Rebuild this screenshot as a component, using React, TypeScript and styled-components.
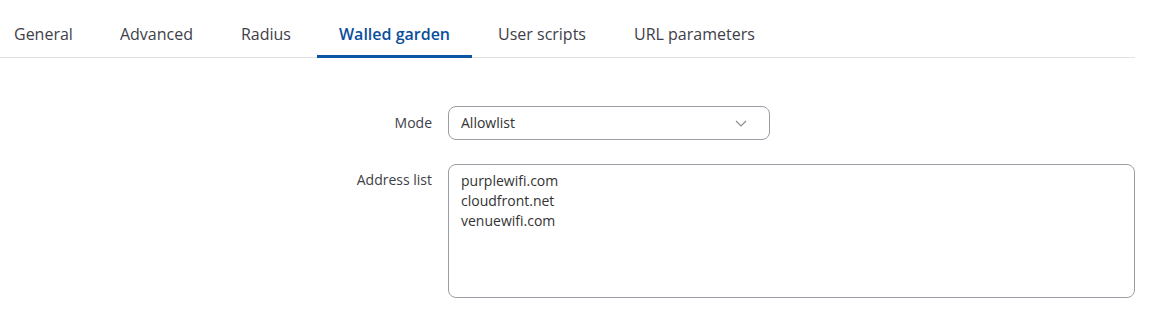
import React from "react";
import styled, { createGlobalStyle } from "styled-components";

const Global = createGlobalStyle`
  html, body { margin: 0; padding: 0; background: #fff; }
  body { font-family: "Open Sans", "Noto Sans", sans-serif; color: #333; }
  * { box-sizing: border-box; }
`;

const Page = styled.div`
  width: 1155px;
  padding-right: 20px;
`;

const TabBar = styled.nav`
  display: flex;
  height: 58px;
  border-bottom: 1px solid #e2e2e4;
  align-items: stretch;
`;

const Tab = styled.div<{ $active?: boolean }>`
  display: flex;
  align-items: center;
  padding: 12px 22px 0;
  margin-right: 4px;
  font-size: 16px;
  font-weight: ${(p) => (p.$active ? 600 : 400)};
  color: ${(p) => (p.$active ? "#0b4f9c" : "#404048")};
  border-bottom: 3px solid ${(p) => (p.$active ? "#0b55a3" : "transparent")};
  margin-bottom: -1px;
  white-space: nowrap;
  &:first-child {
    padding-left: 14px;
    margin-right: 3px;
  }
`;

const Form = styled.div`
  display: flex;
  flex-direction: column;
  gap: 24px;
  padding-top: 48px;
`;

const Row = styled.div<{ $top?: boolean }>`
  display: grid;
  grid-template-columns: 432px 1fr;
  column-gap: 16px;
  align-items: ${(p) => (p.$top ? "start" : "center")};
`;

const Label = styled.label<{ $top?: boolean }>`
  text-align: right;
  font-size: 14px;
  color: #404048;
  padding-top: ${(p) => (p.$top ? "6px" : "0")};
  margin-top: ${(p) => (p.$top ? "0" : "-2px")};
`;

const Select = styled.div`
  width: 322px;
  height: 34px;
  border: 1px solid #9c9ca4;
  border-radius: 8px;
  display: flex;
  align-items: center;
  justify-content: space-between;
  padding: 0 22px 0 12px;
  font-size: 14px;
  color: #333;
  span { margin-top: -2px; }
`;

const TextArea = styled.div`
  height: 134px;
  border: 1px solid #9c9ca4;
  border-radius: 8px;
  padding: 6px 12px;
  font-size: 14px;
  line-height: 20px;
  color: #333;
`;

const Line = styled.div``;

const tabs = ["General", "Advanced", "Radius", "Walled garden", "User scripts", "URL parameters"];

export default function App() {
  return (
    <Page>
      <Global />
      <TabBar>
        {tabs.map((t) => (
          <Tab key={t} $active={t === "Walled garden"}>
            {t}
          </Tab>
        ))}
      </TabBar>
      <Form>
        <Row>
          <Label>Mode</Label>
          <Select>
            <span>Allowlist</span>
            <svg width="12" height="7" viewBox="0 0 12 7" fill="none">
              <path d="M1 1l5 5 5-5" stroke="#8a8a92" strokeWidth="1.1" />
            </svg>
          </Select>
        </Row>
        <Row $top>
          <Label $top>Address list</Label>
          <TextArea>
            <Line>purplewifi.com</Line>
            <Line>cloudfront.net</Line>
            <Line>venuewifi.com</Line>
          </TextArea>
        </Row>
      </Form>
    </Page>
  );
}
